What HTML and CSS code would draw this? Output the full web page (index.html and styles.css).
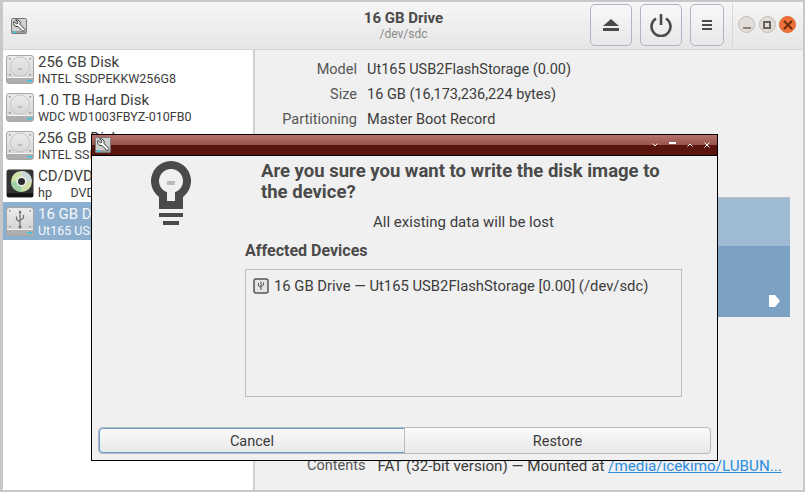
FILE: index.html
```html
<!DOCTYPE html>
<html lang="en">
<head>
    <meta charset="UTF-8">
    <title>Disks</title>
    <link rel="stylesheet" href="styles.css">
</head>
<body>
    <svg class="defs" width="0" height="0">
        <defs>
            <linearGradient id="body-grad" x1="0" y1="0" x2="0" y2="1">
                <stop offset="0" stop-color="#ececec"/>
                <stop offset="1" stop-color="#cfcfcf"/>
            </linearGradient>
            <g id="drive-body">
                <rect x="0.5" y="0.5" width="27" height="28" rx="2.5" fill="url(#body-grad)" stroke="#a6a6a6"/>
                <rect x="1" y="23" width="26" height="5" fill="#aeaeae"/>
                <rect x="1" y="22" width="26" height="1" fill="#f4f4f4"/>
                <rect x="21" y="25" width="5" height="1.5" fill="#35c6e4"/>
                <rect x="3" y="3" width="1.5" height="1.5" fill="#8a8a8a"/>
                <rect x="23.5" y="3" width="1.5" height="1.5" fill="#8a8a8a"/>
                <rect x="3" y="19" width="1.5" height="1.5" fill="#8a8a8a"/>
                <rect x="23.5" y="19" width="1.5" height="1.5" fill="#8a8a8a"/>
            </g>
            <g id="hdd">
                <use href="#drive-body"/>
                <circle cx="14" cy="11.5" r="9.5" fill="none" stroke="#c6c6c6"/>
                <path d="M12 13.5 Q14 15.5 16 13.5" fill="none" stroke="#9a9a9a"/>
            </g>
            <g id="wrench">
                <rect x="0.5" y="0.5" width="15" height="15" rx="1" fill="#cfcfcf" stroke="#777"/>
                <rect x="1" y="13" width="14" height="2" fill="#9a9a9a"/>
                <path d="M3 3.5 L5.5 6 L7 5 L6 3 L4.5 2 A3.5 3.5 0 0 1 9 6.5 L14 11.5 L12 13.5 L7 8.5 A3.5 3.5 0 0 1 3 3.5 Z" fill="#fff" stroke="#333" stroke-width="1"/>
                <rect x="2" y="13.5" width="3" height="1.5" fill="#2fd0ee"/>
            </g>
        </defs>
    </svg>

    <div class="window">
        <header class="headerbar">
            <svg class="app-icon" width="16" height="16" viewBox="0 0 16 16"><use href="#wrench"/></svg>
            <div class="header-title">
                <div class="title">16 GB Drive</div>
                <div class="subtitle">/dev/sdc</div>
            </div>
            <button class="tool-btn">
                <svg width="16" height="14" viewBox="0 0 16 14"><path d="M8 1 L16 8 L0 8 Z" fill="#4a4a4a"/><rect x="0" y="10" width="16" height="3" fill="#4a4a4a"/></svg>
            </button>
            <button class="tool-btn">
                <svg width="24" height="24" viewBox="0 0 24 24"><path d="M7 5.5 A9.5 9.5 0 1 0 17 5.5" fill="none" stroke="#4a4a4a" stroke-width="2.6"/><rect x="10.7" y="1" width="2.6" height="11" fill="#4a4a4a"/></svg>
            </button>
            <button class="tool-btn narrow">
                <svg width="10" height="10" viewBox="0 0 10 10"><path d="M0 0h10v2H0zM0 4h10v2H0zM0 8h10v2H0z" fill="#4a4a4a"/></svg>
            </button>
            <div class="win-buttons">
                <span class="win-btn"><i class="min-mark"></i></span>
                <span class="win-btn"><i class="max-mark"></i></span>
                <span class="win-btn close">
                    <svg width="10" height="10" viewBox="0 0 10 10"><path d="M1 1 L9 9 M9 1 L1 9" stroke="#6b2c12" stroke-width="2"/></svg>
                </span>
            </div>
        </header>

        <div class="main">
            <aside class="sidebar">
                <div class="disk-row">
                    <svg class="disk-icon" viewBox="0 0 28 29"><use href="#hdd"/></svg>
                    <div class="disk-text"><div class="disk-name">256 GB Disk</div><div class="disk-model">INTEL SSDPEKKW256G8</div></div>
                </div>
                <div class="disk-row">
                    <svg class="disk-icon" viewBox="0 0 28 29"><use href="#hdd"/></svg>
                    <div class="disk-text"><div class="disk-name">1.0 TB Hard Disk</div><div class="disk-model">WDC WD1003FBYZ-010FB0</div></div>
                </div>
                <div class="disk-row">
                    <svg class="disk-icon" viewBox="0 0 28 29"><use href="#hdd"/></svg>
                    <div class="disk-text"><div class="disk-name">256 GB Disk</div><div class="disk-model">INTEL SSDPEKKW256G8</div></div>
                </div>
                <div class="disk-row">
                    <svg class="disk-icon" viewBox="0 0 28 29">
                        <rect x="0.5" y="0.5" width="27" height="28" rx="2.5" fill="#333"/>
                        <rect x="1" y="24" width="26" height="4" fill="#141414"/>
                        <circle cx="15.5" cy="12.5" r="10.5" fill="#cfe0a8"/>
                        <path d="M15.5 2 A10.5 10.5 0 0 1 26 12.5 L15.5 12.5 Z" fill="#c9d8dc"/>
                        <path d="M15.5 23 A10.5 10.5 0 0 1 5 12.5 L15.5 12.5 Z" fill="#9fd0a8"/>
                        <circle cx="15.5" cy="12.5" r="5" fill="#f2f2f2"/>
                        <circle cx="15.5" cy="12.5" r="3.5" fill="#2a2a2a"/>
                    </svg>
                    <div class="disk-text"><div class="disk-name">CD/DVD Drive</div><div class="disk-model">hp &nbsp; &nbsp; &nbsp;DVD-RW</div></div>
                </div>
                <div class="disk-row selected">
                    <svg class="disk-icon" viewBox="0 0 28 29">
                        <use href="#drive-body"/>
                        <path d="M14 4 V20 M14 15 L10.5 12.5 V9.5 M14 13.5 L17.5 11 V8" fill="none" stroke="#6e6e6e" stroke-width="1.2"/>
                        <path d="M14 3 L15.5 6 H12.5 Z" fill="#6e6e6e"/>
                        <circle cx="14" cy="20" r="1.5" fill="#6e6e6e"/>
                    </svg>
                    <div class="disk-text"><div class="disk-name">16 GB Drive</div><div class="disk-model">Ut165 USB2FlashStorage</div></div>
                </div>
            </aside>

            <section class="details">
                <div class="props">
                    <div class="prop-label">Model</div><div>Ut165 USB2FlashStorage (0.00)</div>
                    <div class="prop-label">Size</div><div>16 GB (16,173,236,224 bytes)</div>
                    <div class="prop-label">Partitioning</div><div>Master Boot Record</div>
                </div>
                <div class="volume-map">
                    <div class="volume-top"></div>
                    <div class="volume-bottom"><i class="play-mark"></i></div>
                </div>
                <div class="contents-row">
                    <span class="prop-label">Contents</span>
                    <span class="contents-value">FAT (32-bit version) — Mounted at <a href="#">/media/icekimo/LUBUN...</a></span>
                </div>
            </section>
        </div>

        <div class="dialog">
            <div class="dialog-titlebar">
                <svg class="app-icon" width="16" height="16" viewBox="0 0 16 16"><use href="#wrench"/></svg>
                <div class="dialog-controls">
                    <svg width="6" height="4" viewBox="0 0 6 4"><path d="M0.5 0.5 L3 3 L5.5 0.5" fill="none" stroke="#fff"/></svg>
                    <i class="dash"></i>
                    <svg width="6" height="4" viewBox="0 0 6 4"><path d="M0.5 3.5 L3 1 L5.5 3.5" fill="none" stroke="#fff"/></svg>
                    <svg width="6" height="6" viewBox="0 0 6 6"><path d="M0.5 0.5 L5.5 5.5 M5.5 0.5 L0.5 5.5" stroke="#fff"/></svg>
                </div>
            </div>
            <div class="dialog-body">
                <div class="dialog-top">
                    <svg class="bulb" width="40" height="64" viewBox="0 0 40 64">
                        <path d="M8 48 V36 A20 20 0 1 1 32 36 V48 Z M16 40 H24 V31.3 A12 12 0 1 0 16 31.3 Z" fill="#4a4a4a" fill-rule="evenodd"/>
                        <rect x="16" y="20" width="8" height="4" fill="#bbb"/>
                        <rect x="8" y="52" width="24" height="4" fill="#4a4a4a"/>
                        <rect x="12" y="60" width="16" height="4" fill="#4a4a4a"/>
                    </svg>
                    <div class="dialog-message">
                        <h2>Are you sure you want to write the disk image to the device?</h2>
                        <p>All existing data will be lost</p>
                    </div>
                </div>
                <h3>Affected Devices</h3>
                <div class="device-box">
                    <div class="device-row">
                        <svg width="16" height="16" viewBox="0 0 16 16">
                            <rect x="1" y="1" width="14" height="14" rx="2" fill="#e4e4e4" stroke="#555" stroke-width="1.5"/>
                            <path d="M8 3.5 V12 M8 9.5 L5.5 8 V5 M8 8.5 L10.5 7 V4.5" fill="none" stroke="#555"/>
                        </svg>
                        <span>16 GB Drive — Ut165 USB2FlashStorage [0.00] (/dev/sdc)</span>
                    </div>
                </div>
                <div class="dialog-buttons">
                    <button class="cancel">Cancel</button>
                    <button>Restore</button>
                </div>
            </div>
        </div>
    </div>
</body>
</html>
```

FILE: styles.css
```css
* {
    box-sizing: border-box;
}
body {
    margin: 0;
    width: 805px;
    height: 492px;
    overflow: hidden;
    font-family: Roboto, "Noto Sans", sans-serif;
    font-size: 14.5px;
    color: #3c3c3c;
    background-color: #f0f0f0;
}
.defs {
    position: absolute;
}
.window {
    position: relative;
    width: 805px;
    height: 492px;
    display: flex;
    flex-direction: column;
    border: 2px solid #c8c8c8;
    border-width: 2px 2px 2px 3px;
}
.headerbar {
    height: 48px;
    flex: none;
    display: flex;
    align-items: center;
    padding: 0 7px 2px 8px;
    background: linear-gradient(#f6f6f6, #e6e6e6);
    border-bottom: 1px solid #d4d4d4;
}
.app-icon {
    flex: none;
}
.headerbar .app-icon {
    margin-top: 2px;
}
.header-title {
    flex: 1;
    text-align: center;
    padding-left: 198px;
    padding-top: 2px;
}
.title {
    font-weight: bold;
    font-size: 15px;
    line-height: 17px;
    color: #4a4a4a;
}
.subtitle {
    font-size: 12px;
    line-height: 15px;
    color: #8a8a8a;
}
.tool-btn {
    width: 42px;
    height: 42px;
    padding: 0;
    margin-left: 8px;
    display: flex;
    align-items: center;
    justify-content: center;
    background: linear-gradient(#f8f8f8, #e8e8e8);
    border: 1px solid #aeb6c6;
    border-radius: 5px;
}
.tool-btn.narrow {
    width: 34px;
}
.win-buttons {
    display: flex;
    gap: 3.5px;
    align-items: center;
    margin-left: 8px;
    padding-left: 5px;
    height: 44px;
    border-left: 1px solid #d8d8d8;
}
.win-btn {
    width: 17px;
    height: 17px;
    border-radius: 50%;
    display: flex;
    align-items: center;
    justify-content: center;
    background: #e2ddd8;
    border: 1px solid #c4bdb6;
}
.win-btn.close {
    background: #ee7138;
    border-color: #dd6a33;
}
.min-mark {
    width: 8px;
    height: 2px;
    margin-top: 7px;
    background: #8a8278;
}
.max-mark {
    width: 8px;
    height: 8px;
    border: 2px solid #6a6258;
}
.main {
    flex: 1;
    min-height: 0;
    display: flex;
}
.sidebar {
    width: 252px;
    flex: none;
    background: #fff;
    border-right: 2px solid #d0d0d0;
}
.disk-row {
    height: 38px;
    display: flex;
    align-items: center;
    gap: 4px;
    padding-left: 3px;
    color: #3c3c3c;
}
.disk-row.selected {
    background: #8cafcf;
    color: #f4f7fa;
}
.disk-icon {
    width: 28px;
    height: 29px;
    flex: none;
}
.disk-text {
    padding-top: 1px;
}
.disk-name {
    font-size: 15px;
    line-height: 17px;
    white-space: nowrap;
}
.disk-model {
    font-size: 12.5px;
    line-height: 15px;
    white-space: nowrap;
}
.details {
    flex: 1;
    min-width: 0;
    display: flex;
    flex-direction: column;
    padding: 7px 13px 0 14px;
}
.props {
    display: grid;
    grid-template-columns: 88px auto;
    column-gap: 10px;
    grid-auto-rows: 25px;
    align-items: center;
}
.prop-label {
    text-align: right;
    color: #555;
}
.volume-map {
    margin-top: 65px;
    height: 120px;
    display: flex;
    flex-direction: column;
}
.volume-top {
    height: 49px;
    background: #9fbbd3;
    border-top: 1px solid #c0c0c0;
}
.volume-bottom {
    flex: 1;
    position: relative;
    background: #7ba2c4;
}
.play-mark {
    position: absolute;
    right: 10px;
    bottom: 10px;
    width: 11px;
    height: 12px;
    background: #fff;
    clip-path: polygon(0 0, 55% 0, 100% 50%, 55% 100%, 0 100%);
}
.contents-row {
    display: flex;
    gap: 12px;
    margin-top: 140px;
    line-height: 18px;
    padding-left: 38px;
    white-space: nowrap;
}
.contents-value {
    font-size: 15.2px;
}
a {
    color: #2a8fe0;
}
.dialog {
    position: absolute;
    left: 88px;
    top: 132px;
    width: 627px;
    height: 327px;
    display: flex;
    flex-direction: column;
    border: 1px solid #000;
    background: #f0f0f0;
}
.dialog-titlebar {
    height: 21px;
    flex: none;
    display: flex;
    align-items: center;
    justify-content: space-between;
    padding-left: 3px;
    background: linear-gradient(#b5716a 0, #98554e 48%, #5a150f 48%, #5a150f 100%);
    border-bottom: 1px solid #000;
}
.dialog-controls {
    display: flex;
    align-items: center;
    gap: 11px;
    padding-right: 7px;
}
.dash {
    width: 7px;
    height: 2px;
    margin-bottom: 5px;
    background: #fff;
}
.dialog-body {
    flex: 1;
    display: flex;
    flex-direction: column;
    padding: 5px 6px 6px;
}
.dialog-top {
    display: flex;
    height: 81px;
}
.bulb {
    margin-left: 53px;
    flex: none;
}
.dialog-message {
    margin-left: 70px;
    width: 412px;
}
.dialog-message h2 {
    margin: 0;
    font-size: 18.5px;
    line-height: 21px;
    color: #4a4a4a;
}
.dialog-message p {
    margin: 10px 0 0;
    padding-right: 7px;
    text-align: center;
    font-size: 15px;
    line-height: 18px;
}
.dialog-body h3 {
    margin: 0 0 9px 147px;
    font-size: 16px;
    line-height: 18px;
    color: #4a4a4a;
}
.device-box {
    height: 128px;
    margin-left: 147px;
    margin-right: 29px;
    padding: 7px 7px;
    border: 1px solid #bdbdbd;
    font-size: 14.8px;
}
.device-row {
    display: flex;
    align-items: center;
    gap: 5px;
    white-space: nowrap;
}
.dialog-buttons {
    display: grid;
    grid-template-columns: 306px 1fr;
    height: 27px;
    margin-top: auto;
    border: 1px solid #b8b8b8;
    border-radius: 4px;
    background: linear-gradient(#fafafa, #e8e8e8);
    overflow: hidden;
}
.dialog-buttons button {
    border: none;
    background: none;
    font: inherit;
    color: #3c3c3c;
    padding: 2px 0 0;
}
.dialog-buttons .cancel {
    border: 1px solid #6c9fcf;
    border-radius: 4px 0 0 4px;
    border-right: 1px solid #bbb;
}
```
